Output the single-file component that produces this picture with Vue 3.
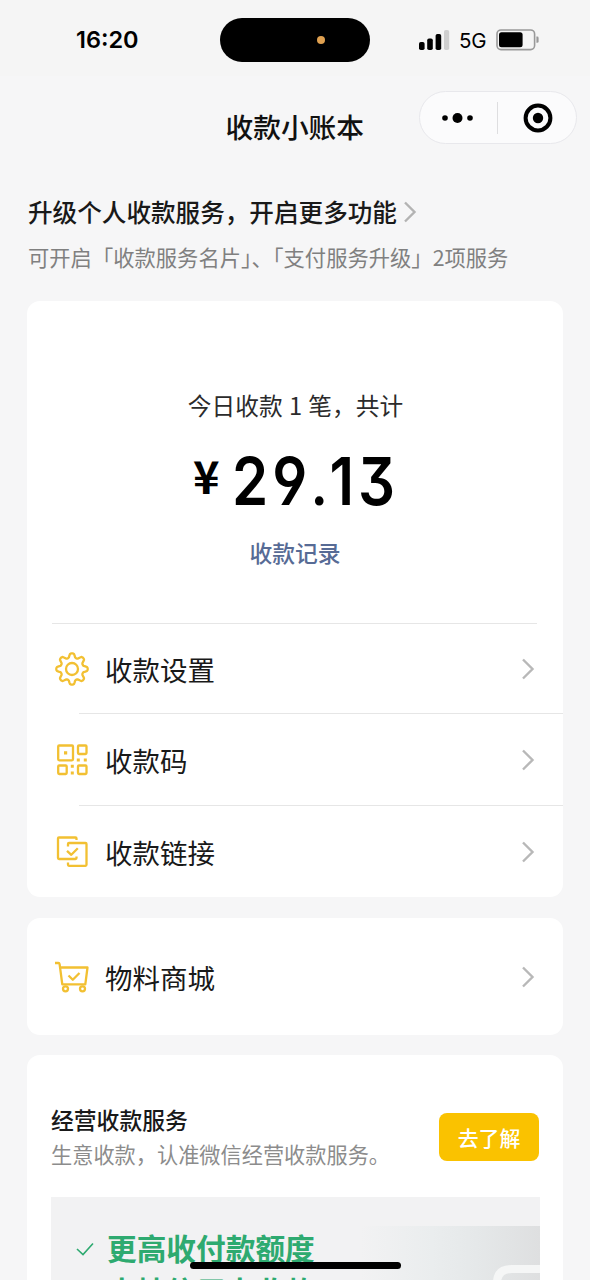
<script setup>
const menu = [
  { icon: 'gear', label: '收款设置' },
  { icon: 'qr', label: '收款码' },
  { icon: 'link', label: '收款链接' },
]
const gearPath = (() => {
  const pts = []
  for (let i = 0; i < 96; i++) {
    const a = (i / 96) * Math.PI * 2
    const c = Math.cos(a * 8)
    const r = 13.6 + 2.1 * Math.tanh(c * 1.7) / Math.tanh(1.7)
    pts.push(`${(18 + r * Math.sin(a)).toFixed(2)} ${(18 - r * Math.cos(a)).toFixed(2)}`)
  }
  return `M${pts.join('L')}Z`
})()
</script>

<template>
  <div class="screen">
    <header class="status">
      <span class="time">16:20</span>
      <div class="island"><i></i></div>
      <div class="signals">
        <svg class="bars" width="31" height="20" viewBox="0 0 31 20">
          <rect x="0" y="12" width="5.6" height="8" rx="1.8" />
          <rect x="8.2" y="8.5" width="5.6" height="11.5" rx="1.8" />
          <rect x="16.6" y="4" width="5.6" height="16" rx="1.8" />
          <rect x="25" y="0" width="5.2" height="20" rx="1.8" fill="#cfcfcf" />
        </svg>
        <span class="net">5G</span>
        <svg width="44" height="22" viewBox="0 0 44 22">
          <rect x="1" y="1" width="37.6" height="19.6" rx="4" fill="none" stroke="#999" stroke-width="1.6" />
          <rect x="3" y="3.2" width="23.6" height="15" rx="2.5" />
          <path d="M40.4 7.6h.8a1.4 1.4 0 0 1 1.4 1.4v3.4a1.4 1.4 0 0 1-1.4 1.4h-.8z" fill="#999" />
        </svg>
      </div>
    </header>

    <nav class="nav">
      <h1>收款小账本</h1>
      <div class="capsule">
        <svg width="77" height="50" viewBox="0 0 77 50">
          <circle cx="25" cy="25" r="2.8" /><circle cx="37.500" cy="25" r="5" /><circle cx="50" cy="25" r="2.8" />
        </svg>
        <b></b>
        <svg width="77" height="50" viewBox="0 0 77 50">
          <circle cx="40" cy="25" r="12.4" fill="none" stroke="#000" stroke-width="4" /><circle cx="40" cy="25" r="5.2" />
        </svg>
      </div>
    </nav>

    <section class="upgrade">
      <div class="headline">
        <span>升级个人收款服务，开启更多功能</span>
        <svg width="14" height="24" viewBox="0 0 14 24"><path d="M2 2.5 11.5 12 2 21.5" fill="none" stroke="#b3b3b3" stroke-width="2.4" /></svg>
      </div>
      <p>可开启「收款服务名片」、「支付服务升级」2项服务</p>
    </section>

    <section class="card summary">
      <div class="today">今日收款 1 笔，共计</div>
      <div class="amount"><span class="yen">¥</span><span class="num">29<span class="point">.</span>13</span></div>
      <div class="record">收款记录</div>
      <div class="menu">
        <div v-for="m in menu" :key="m.icon" class="row">
          <svg class="icon" width="36" height="36" viewBox="0 0 36 36">
            <g v-if="m.icon === 'gear'">
              <path :d="gearPath" /><circle cx="18" cy="18" r="6" />
            </g>
            <g v-else-if="m.icon === 'qr'">
              <rect x="4.200" y="3.500" width="14.800" height="14.800" rx="1" />
              <rect x="24" y="3.500" width="8.500" height="8.500" rx="1" />
              <rect x="4.200" y="23.500" width="8.500" height="8.500" rx="1" />
              <rect x="24" y="23.500" width="8.500" height="8.500" rx="1" />
              <path class="dots" d="M10 9.300h3.200v3.200H10zM22.800 16.500h3v3h-3zM29.800 16.500h3v3h-3zM16.800 22.800h3v3h-3zM16.800 29.500h3v3h-3z" />
            </g>
            <g v-else>
              <path d="M22.500 6V4.500a1 1 0 0 0-1-1h-16.500a1 1 0 0 0-1 1v19.500a1 1 0 0 0 1 1h16.500a1 1 0 0 0 1-1V22.500" />
              <path d="M14 12.500V10a1 1 0 0 1 1-1h16.500a1 1 0 0 1 1 1v20.800a1 1 0 0 1-1 1H15a1 1 0 0 1-1-1V28.500" />
              <path d="m13 16.800 4.300 4 6.500-6.500" />
            </g>
          </svg>
          <span>{{ m.label }}</span>
          <svg class="arrow" width="14" height="24" viewBox="0 0 14 24"><path d="M2 2.500 11.500 12 2 21.500" /></svg>
        </div>
      </div>
    </section>

    <section class="card mall">
      <div class="row">
        <svg class="icon" width="36" height="36" viewBox="0 0 36 36">
          <path d="M1 4h3.300a1.300 1.300 0 0 1 1.300 1.100L8.300 25.300H31.300L33.500 8.500H6.200" />
          <path d="m14.500 16.500 4.300 4.200 6.700-6.700" />
          <circle cx="11.500" cy="29.800" r="2.500" /><circle cx="28.500" cy="29.800" r="2.500" />
        </svg>
        <span>物料商城</span>
        <svg class="arrow" width="14" height="24" viewBox="0 0 14 24"><path d="M2 2.500 11.500 12 2 21.500" /></svg>
      </div>
    </section>

    <section class="card business">
      <div class="intro">
        <div>
          <h2>经营收款服务</h2>
          <p>生意收款，认准微信经营收款服务。</p>
        </div>
        <button>去了解</button>
      </div>
      <div class="banner">
        <div class="photo">
          <svg width="180" height="60" viewBox="0 0 180 60"><path d="M137 64V57q0-14 15-14h35" fill="none" stroke="#f5f6f6" stroke-width="8" /></svg>
        </div>
        <ul>
          <li><svg width="20" height="16" viewBox="0 0 20 16"><path d="m2 8 6 5.500L18 2.500" fill="none" stroke="#2eaa70" stroke-width="1.600" /></svg>更高收付款额度</li>
          <li><svg width="20" height="16" viewBox="0 0 20 16"><path d="m2 8 6 5.500L18 2.500" fill="none" stroke="#2eaa70" stroke-width="1.600" /></svg>支持信用卡收款</li>
        </ul>
      </div>
    </section>
    <div class="home"></div>
  </div>
</template>

<style>
body { background: #f6f6f7; }
</style>
<style scoped>
* { box-sizing: border-box; }
h1, h2, p, ul { margin: 0; padding: 0; }
svg { display: block; flex: none; }
.screen { position: relative; width: 590px; height: 1280px; overflow: hidden; background: #f6f6f7; font-family: "Noto Sans CJK SC", sans-serif; color: #191919; white-space: nowrap; }
.status { display: flex; height: 76px; background: #f5f5f5; align-items: flex-start; }
.time { width: 144px; margin: 26px 0 0 76px; font: 600 23.500px/28px Inter, sans-serif; color: #000; letter-spacing: 0; }
.island { width: 150px; height: 44px; margin-top: 18px; border-radius: 22px; background: #000; display: flex; align-items: center; padding-left: 97px; }
.island i { width: 8px; height: 8px; border-radius: 50%; background: #dfa050; }
.signals { display: flex; align-items: center; height: 22px; margin: 29px 0 0 49px; }
.net { width: 46px; padding-left: 9px; font: 400 20.500px/22px Inter, sans-serif; color: #000; letter-spacing: -.3px; padding-top: 2px; }
.nav { height: 116px; display: grid; grid-template-columns: 419px 158px; }
.nav h1 { grid-column: 1; padding-left: 225.500px; margin-top: 30px; font-size: 27.700px; line-height: 40px; font-weight: 500; color: #111; }
.capsule { grid-column: 2; width: 158px; height: 53px; margin-top: 15px; border: 1.500px solid #e8e8ec; border-radius: 27px; background: #fbfbfc; display: flex; align-items: center; }
.capsule b { width: 1px; height: 32px; background: #dedee0; }
.upgrade { height: 109px; padding-left: 28px; }
.headline { display: flex; align-items: center; height: 40px; font-size: 24.600px; font-weight: 500; gap: 6px; }
.headline span { margin-top: -2px; }
.upgrade p { font-size: 21.300px; line-height: 30px; margin-top: 10px; color: #808080; font-weight: 400; }
.card { width: 536px; margin-left: 27px; background: #fff; border-radius: 13px; }
.summary { height: 596px; padding-top: 86px; margin-bottom: 21px; text-align: center; }
.today { font-size: 23.700px; line-height: 36px; color: #2b2b2b; word-spacing: 1px; padding-left: 1px; }
.amount { height: 78px; margin-top: 19px; display: flex; padding-left: 166px; color: #000; font-family: Inter, sans-serif; }
.yen { width: 39px; text-align: left; line-height: 78px; margin-top: -6px; font-family: "Noto Sans CJK SC", sans-serif; font-weight: 700; font-size: 45px; }
.num { font-size: 66px; line-height: 78px; font-weight: 600; letter-spacing: 4.500px; transform: scaleX(.88); transform-origin: left; font-feature-settings: "ss01" 1, "cv09" 1; }
.point { font-family: Roboto, sans-serif; letter-spacing: 2px; }
.record { margin-top: 16px; font-size: 22.800px; line-height: 34px; color: #576b95; font-weight: 500; }
.menu { margin-top: 53px; }
.row { height: 92px; display: flex; align-items: center; padding: 0 28px 0 27px; font-size: 27.500px; position: relative; }
.row span { margin: -1px 0 0 -1px; }
.menu .row { padding-top: 1px; }
.menu .row span { margin-top: 1px; }
.menu .row:first-child { height: 90px; padding-top: 1px; }
.menu .row::before { content: ""; position: absolute; top: 0; left: 52px; right: 0; height: 1px; background: #e6e6e6; }
.menu .row:first-child::before { left: 25px; right: 26px; }
.icon { margin-right: 16px; fill: none; stroke: #f2c032; stroke-width: 2.300; stroke-linejoin: round; }
.dots { fill: #f2c032; stroke: none; }
.arrow { margin-left: auto; }
.arrow path { fill: none; stroke: #b8b8b8; stroke-width: 2.400; }
.mall { height: 117px; padding-top: 13px; margin-bottom: 20px; }
.business { height: 225px; padding: 48px 24px 0; border-radius: 13px 13px 0 0; overflow: hidden; }
.intro { display: flex; justify-content: space-between; height: 94px; }
h2 { font-size: 22.800px; line-height: 34px; font-weight: 500; }
.intro p { font-size: 21.200px; line-height: 34px; color: #8c8c8c; }
button { width: 100px; height: 48px; margin-top: 10px; padding: 0; border: 0; border-radius: 8px; background: #fac200; color: #fff; font: 500 20.900px/46px "Noto Sans CJK SC", sans-serif; }
.banner { height: 90px; background: #f2f2f3; margin-right: -1px; position: relative; overflow: hidden; }
.photo { position: absolute; right: 0; top: 29px; width: 180px; height: 60px; background: linear-gradient(90deg, #f2f2f3, #eaedee 40%, #e5e8e9 65%, #dedfe0); }
ul { position: relative; list-style: none; padding: 29px 0 0 24px; }
li { display: flex; align-items: center; height: 43px; gap: 12px; font-size: 29.700px; font-weight: 700; color: #2eaa70; }
li svg { margin-top: 2px; }
.home { position: absolute; left: 190px; bottom: 11px; width: 211px; height: 7px; border-radius: 4px; background: #000; }
</style>
